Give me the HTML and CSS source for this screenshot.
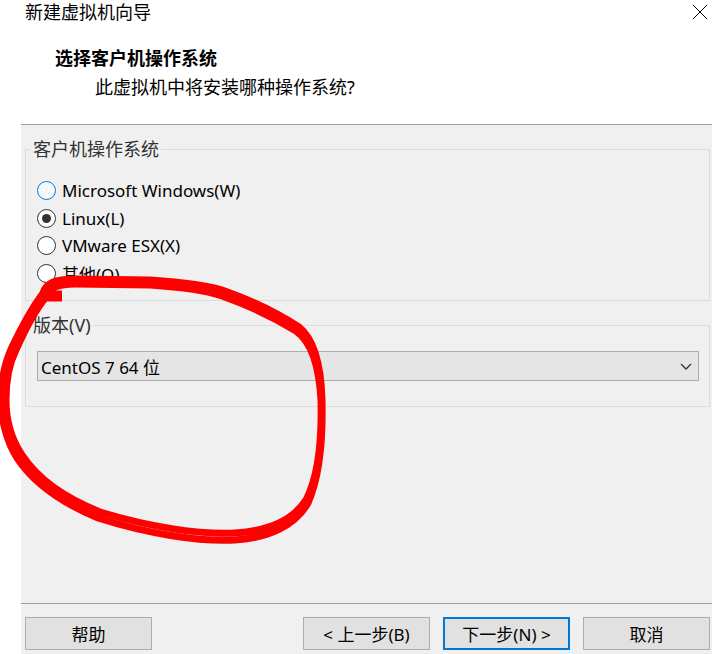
FILE: index.html
```html
<!DOCTYPE html>
<html>
<head>
  <meta charset="utf-8">
  <title>新建虚拟机向导</title>
  <link rel="stylesheet" href="styles.css">
</head>
<body>
  <div class="window">
    <div class="titlebar">
      <span class="title">新建虚拟机向导</span>
      <svg class="close" viewBox="0 0 16 16"><path d="M1 1 L15 15 M15 1 L1 15"/></svg>
    </div>

    <div class="header">
      <div class="heading">选择客户机操作系统</div>
      <div class="subheading">此虚拟机中将安装哪种操作系统?</div>
    </div>

    <div class="panel">
      <fieldset class="group os-group">
        <legend>客户机操作系统</legend>
        <label class="radio"><input type="radio" name="os" class="hover">Microsoft Windows(W)</label>
        <label class="radio"><input type="radio" name="os" checked>Linux(L)</label>
        <label class="radio"><input type="radio" name="os">VMware ESX(X)</label>
        <label class="radio"><input type="radio" name="os">其他(O)</label>
      </fieldset>

      <fieldset class="group version-group">
        <legend>版本(V)</legend>
        <div class="combo">
          <span>CentOS 7 64 位</span>
          <svg class="chevron" viewBox="0 0 12 7"><path d="M1 1 L6 6 L11 1"/></svg>
        </div>
      </fieldset>

      <div class="footer">
        <button class="btn">帮助</button>
        <div class="nav">
          <button class="btn">&lt; 上一步(B)</button>
          <button class="btn primary">下一步(N) &gt;</button>
          <button class="btn">取消</button>
        </div>
      </div>
    </div>

    <!-- hand drawn red mark: two passes give the uneven marker width -->
    <svg class="markup" viewBox="0 0 712 654">
      <path class="tick" d="M62 296 L44 296"/>
      <path d="M46 297 C48 289 56 284 75 284 L150 285 C180 287 205 290 222 296 C250 306 275 318 296 331 C312 342 319 365 321 400 C322 440 319 475 306 500 C293 520 268 531 235 533 C200 535 150 527 100 512 C65 498 37 478 22 455 C12 440 6 420 6 400 C6 380 10 362 16 350 C24 332 33 313 46 297"/>
      <path d="M43 293 C46 283 55 279 75 279 L150 280 C180 282 207 285 225 291 C253 301 279 314 299 327 C314 339 321 363 322 400 C323 440 320 476 308 503 C295 526 268 538 235 540 C200 542 148 534 98 518 C62 503 33 482 17 458 C7 442 1 420 1 400 C1 380 6 360 12 347 C21 328 31 309 43 293"/>
    </svg>
  </div>
</body>
</html>
```

FILE: styles.css
```css
* {
  box-sizing: border-box;
}

body {
  margin: 0;
  background: #fff;
  font-family: "Noto Sans", "Noto Sans CJK SC", sans-serif;
  color: #000;
}

.window {
  position: relative;
  width: 712px;
  height: 654px;
  overflow: hidden;
}

.titlebar {
  height: 30px;
  display: flex;
  justify-content: space-between;
  align-items: flex-start;
  padding: 0 4px 0 25px;
}

.title {
  font-size: 18px;
  line-height: 24px;
}

.close {
  width: 16px;
  height: 16px;
  margin-top: 4px;
  fill: none;
  stroke: #000;
  stroke-width: 1;
}

.header {
  height: 94px;
  padding: 18px 0 0 55px;
}

.heading {
  font-size: 18px;
  line-height: 20px;
  font-weight: bold;
}

.subheading {
  font-size: 18px;
  line-height: 20px;
  margin: 9px 0 0 40px;
}

.panel {
  margin-left: 21px;
  height: 530px;
  background: #f0f0f0;
  border-top: 1px solid #a0a0a0;
  display: flex;
  flex-direction: column;
  padding: 15px 2px 0 4px;
}

.group {
  margin: 0;
  min-width: 0;
  border: 1px solid #dcdcdc;
  padding: 0 7px;
}

.group legend {
  padding: 0 2px;
  margin-left: -2px;
  font-size: 18px;
  line-height: 18px;
  color: #333;
}

.os-group {
  padding-top: 19px;
  padding-bottom: 13px;
}

.radio {
  display: flex;
  align-items: center;
  height: 27.5px;
  padding-left: 4px;
  font-size: 17px;
}

.radio input {
  appearance: none;
  width: 19px;
  height: 19px;
  margin: 0 6px 0 0;
  border: 1px solid #333;
  border-radius: 50%;
  background: #fff;
  display: grid;
  place-items: center;
}

.radio input.hover {
  border-color: #0078d7;
  background: #f4f9fd;
}

.radio input:checked::after {
  content: "";
  width: 9px;
  height: 9px;
  border-radius: 50%;
  background: #333;
}

.version-group {
  margin-top: 15px;
  padding-top: 17px;
  padding-bottom: 25px;
}

.combo {
  display: flex;
  justify-content: space-between;
  align-items: center;
  height: 30px;
  margin: 0 3px 0 4px;
  padding: 0 6px 0 3px;
  background: #e5e5e5;
  border: 1px solid #adadad;
  font-size: 17px;
}

.chevron {
  width: 12px;
  height: 7px;
  fill: none;
  stroke: #333;
  stroke-width: 1.3;
}

.footer {
  margin: auto -2px 0 -4px;
  border-top: 1px solid #a0a0a0;
  display: flex;
  justify-content: space-between;
  padding: 13px 2px 4px 4px;
}

.nav {
  display: flex;
  gap: 13px;
}

.btn {
  width: 127px;
  height: 33px;
  padding: 0;
  background: #e1e1e1;
  border: 1px solid #adadad;
  font-family: inherit;
  font-size: 17px;
  color: #000;
}

.btn.primary {
  border: 2px solid #0078d7;
}

.markup {
  position: absolute;
  top: 0;
  left: 0;
  width: 712px;
  height: 654px;
  pointer-events: none;
  fill: none;
  stroke: #f00;
  stroke-width: 7;
  stroke-linecap: round;
  stroke-linejoin: round;
}

.markup .tick {
  stroke-width: 11;
  stroke-linecap: butt;
}
```
